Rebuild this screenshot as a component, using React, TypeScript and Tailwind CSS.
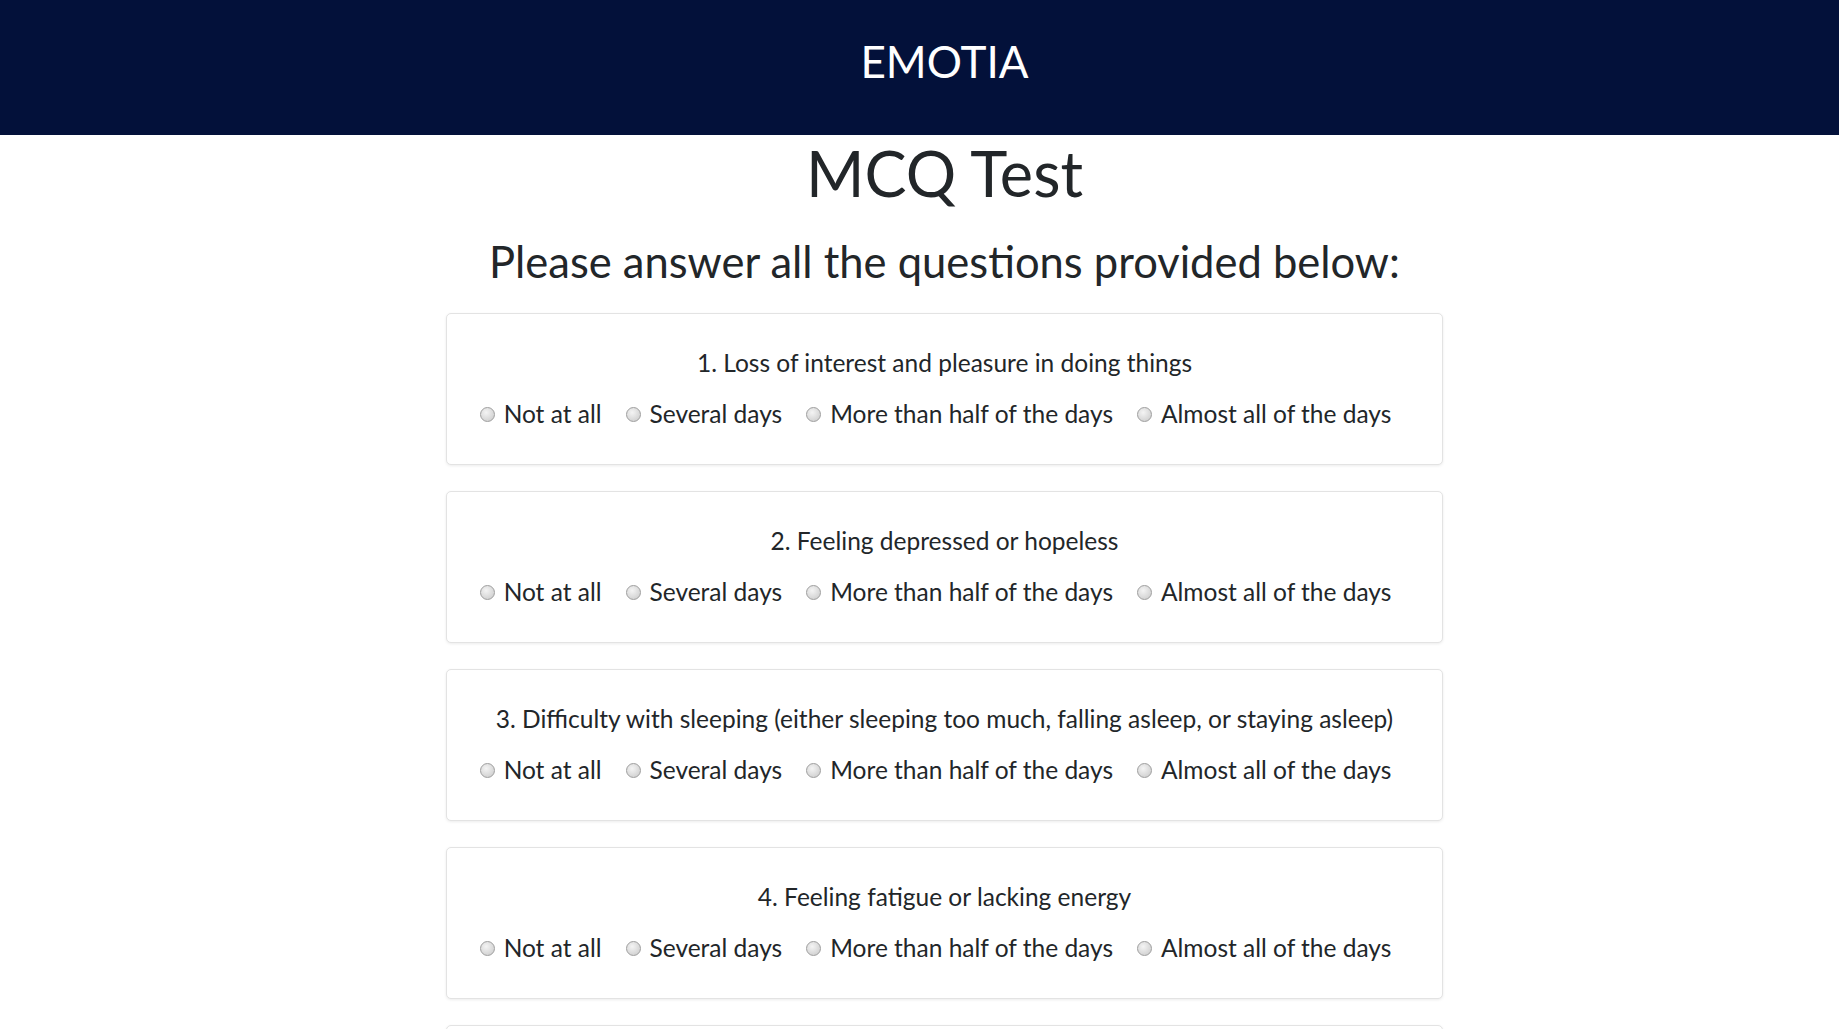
import React from "react";

const questions = [
  "1. Loss of interest and pleasure in doing things",
  "2. Feeling depressed or hopeless",
  "3. Difficulty with sleeping (either sleeping too much, falling asleep, or staying asleep)",
  "4. Feeling fatigue or lacking energy",
  "5. Poor appetite or overeating",
];

const options = ["Not at all", "Several days", "More than half of the days", "Almost all of the days"];

function Radio() {
  return (
    <span className="inline-block w-[15px] h-[15px] rounded-full border border-[#9e9e9e] bg-[radial-gradient(circle_at_40%_35%,#f4f4f4,#c8c8c8)] shrink-0" />
  );
}

export default function App() {
  return (
    <div className="min-h-screen bg-white text-[#222629]" style={{ fontFamily: "Lato, 'Noto Sans', sans-serif" }}>
      <header className="h-[135px] bg-[#03113a] pl-[50px] flex justify-center">
        <div className="pt-[36px] text-[44px] leading-[50px] text-white">EMOTIA</div>
      </header>
      <main className="pl-[50px] flex flex-col items-center">
        <h1 className="text-[63px] leading-[76px] text-[#222629]">MCQ Test</h1>
        <h2 className="text-[43.5px] leading-[52px] mt-[24px] text-[#222629]">Please answer all the questions provided below:</h2>
        <div className="mt-[26px] flex flex-col gap-[26px] w-[997px]">
          {questions.map((q, i) => (
            <div key={i} className="h-[152px] rounded-[5px] border border-[#e3e3e3] shadow-[0_1px_3px_rgba(0,0,0,0.08)] bg-white flex flex-col items-center pt-[34px]">
              <div className="text-[24.5px] leading-[30px]">{q}</div>
              <div className="mt-[21px] pr-[18px] flex items-center gap-[24px] text-[24.5px] leading-[30px]">
                {options.map((o) => (
                  <label key={o} className="flex items-center gap-[9px]">
                    <Radio />
                    <span>{o}</span>
                  </label>
                ))}
              </div>
            </div>
          ))}
        </div>
      </main>
    </div>
  );
}
